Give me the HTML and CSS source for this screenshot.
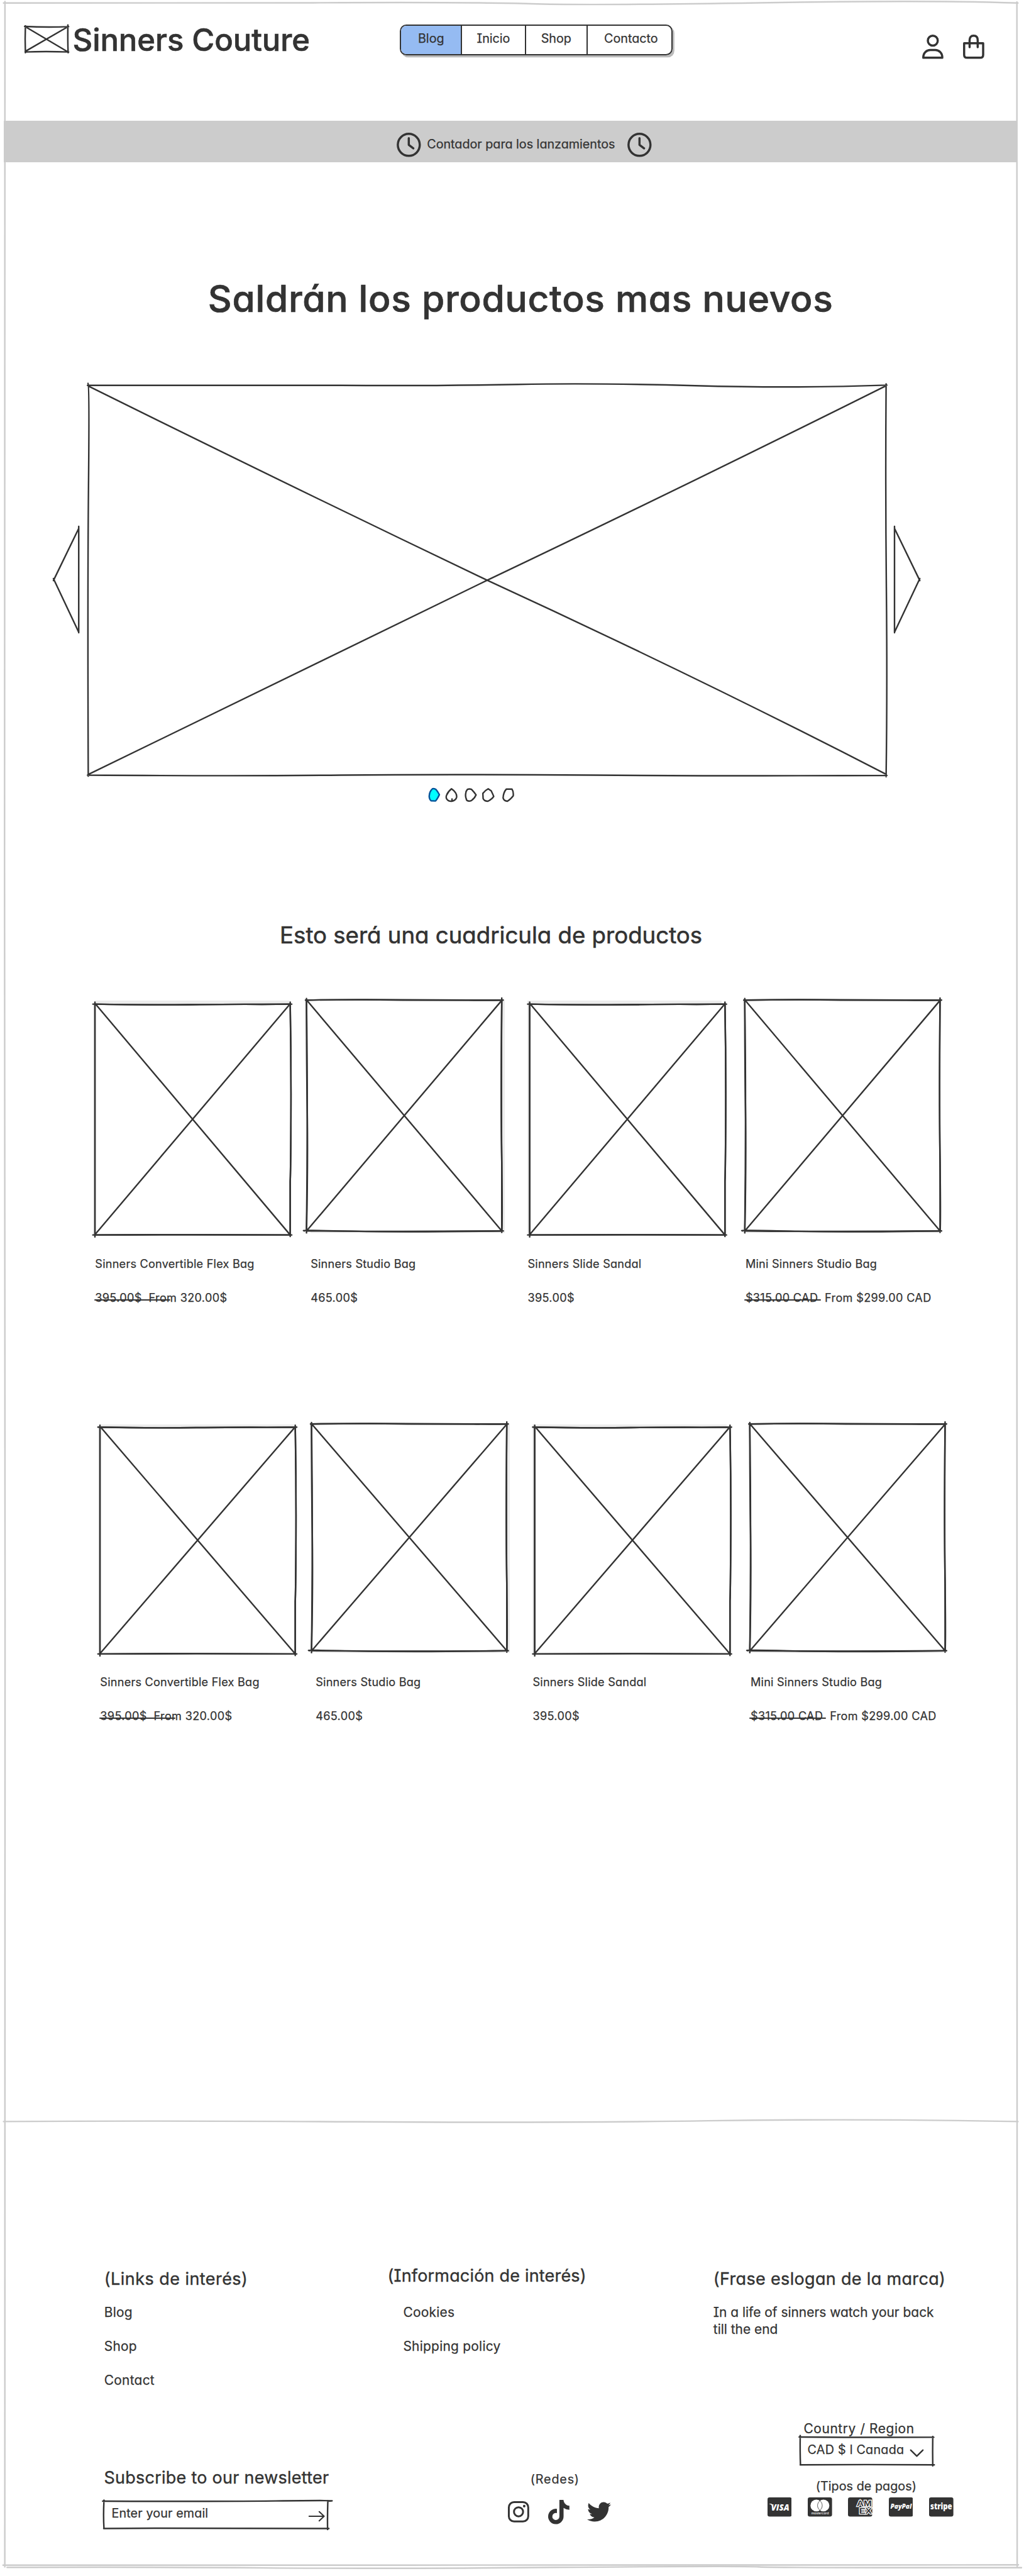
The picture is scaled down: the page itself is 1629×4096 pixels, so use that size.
FILE: index.html
```html
<!DOCTYPE html>
<html lang="es">
<head>
<meta charset="utf-8">
<title>Sinners Couture</title>
<link rel="stylesheet" href="styles.css">
</head>
<body>
<svg class="defs" width="0" height="0" aria-hidden="true">
  <defs>
    <symbol id="sketch-a" viewBox="0 0 386 456" preserveAspectRatio="none" overflow="visible">
      <path d="M0 0Q90 2 190 1T330 .5L386 0Q388 110 387.500 220T386 350L386 456Q190 455 0 456Q1 220 0 0Z" fill="#fff"/>
      <path d="M-4 0Q90 2 190 1T330 .5L389 0M386-4Q388 110 387.500 220T386 350V459M389 456Q190 455 -4 456M0 460Q1 220 0-4M3 2L386 456M383 3L2 453"/>
    </symbol>
    <symbol id="sketch-b" viewBox="0 0 386 456" preserveAspectRatio="none" overflow="visible">
      <path d="M0 0Q100-1.500 190 0L386 0Q384 200 386 320V456Q190 458 0 456Q3 220 0 0Z" fill="#fff"/>
      <path d="M-2 0Q100-1.500 190-.5L320 0Q350 1 389 0M386-4Q384.500 200 386 320T386 459M389 456Q200 459 90 456.500T-4 456M0 460Q3 320 1.500 220T0-3M2 2L386 456M384 3L2 454"/>
    </symbol>
  </defs>
</svg>
<div class="page">
  <svg class="frame" viewBox="0 0 2024 5090" preserveAspectRatio="none" aria-hidden="true">
    <path d="M7 6Q300 7 620 5.500T1050 7.500T1500 5.500T2012 6"/>
    <path d="M9.800 3Q11 900 9 1700T10 3200T9.500 5072"/>
    <path d="M2010 4Q2011 1500 2010 2500T2010.500 5071"/>
    <path d="M7 4192Q300 4190 700 4192.500T1400 4190.500T2012 4192"/>
    <path d="M6 5068.500Q500 5067 800 5068.500T2013 5068"/>
    <path d="M14 5073Q300 5072 520 5074T1100 5073T1500 5072T2019 5073.500"/>
  </svg>

  <header class="header">
    <div class="brand">
      <svg class="brand-mark" viewBox="0 0 85 51"><path d="M-1 0Q40 2 86 .5M84.500-3Q84 30 85 52M86 50.500Q40 49 0 50.500M.5 52Q-.5 25 .5-1M1 1L84 50M84 1L1 49"/></svg>
      <span class="brand-name">Sinners Couture</span>
    </div>
    <nav class="nav">
      <a class="nav-item nav-active">Blog</a>
      <a class="nav-item">Inicio</a>
      <a class="nav-item">Shop</a>
      <a class="nav-item">Contacto</a>
    </nav>
    <div class="tools">
      <svg class="tool" viewBox="0 0 42 48"><circle cx="21" cy="12" r="9.800"/><path d="M2.200 45.800C2 36 9 30.500 16 30.500H26C33 30.500 40 36 39.800 45.800Z"/></svg>
      <svg class="tool" viewBox="0 0 42 48"><path d="M2.200 17.200H39.800V40Q39.800 45.800 34 45.800H8Q2.200 45.800 2.200 40ZM13 25V11Q13 2.200 21 2.200T29 11V25"/></svg>
    </div>
  </header>

  <div class="banner">
    <svg class="clock" viewBox="0 0 48 48"><circle cx="24" cy="24" r="21.700"/><path d="M24 11V24L33 31"/></svg>
    <span class="banner-text">Contador para los lanzamientos</span>
    <svg class="clock" viewBox="0 0 48 48"><circle cx="24" cy="24" r="21.700"/><path d="M24 11V24L33 31"/></svg>
  </div>

  <main>
    <h1 class="hero-title">Saldrán los productos mas nuevos</h1>
    <section class="carousel">
      <svg class="arrow" viewBox="0 0 50 210"><path d="M50 0V210M50 4L0 107M0 103L50 209"/></svg>
      <svg class="slide" viewBox="0 0 1578 771"><path d="M-1 1Q300 0 500 1T850-1T1200 1.500T1579 .5M1577.500-2Q1576 200 1578 400T1577.500 774M1579 771.500Q1300 773 1000 771T500 771T-1 771M.5 773Q-1 400 1 200T0-3M2 3Q400 200 789 386Q1200 575 1575 768M1575 3Q1200 190 789 386Q400 575 2 769"/></svg>
      <svg class="arrow" viewBox="0 0 50 210"><path d="M0 0V210M0 4L50 107M50 103L0 209"/></svg>
    </section>
    <svg class="dots" viewBox="0 0 190 60">
      <path class="dot-on" d="M15 18.800Q19 18 22 20.500Q25 24 28.500 30.500Q26 37 21 43L12 42.500Q8 39 8.500 33Q9 24 15 18.800Z"/>
      <path d="M52.500 19Q57 22 60 26Q63.500 31 62.500 36Q61 42 53 43.500Q46 44 43 39Q41 35 43 31Q46 24 52.500 19ZM53.500 39V43"/>
      <path d="M84 20Q88 18.500 92 20Q97 25 101 31Q98 38 92 42Q87 44.500 83 42Q79.500 36 80.500 29Q81 23 84 20Z"/>
      <path d="M125 19L131 23Q133.500 28 136 34Q133 39 124.500 43.500Q117 43.500 115 38L114.500 28Q119 22 125 19Z"/>
      <path d="M161 19.500L172 19.500Q175.500 25 174.500 33Q170 39 163 43.500Q156 43 154.500 37Q155 26 161 19.500Z"/>
    </svg>

    <h2 class="grid-title">Esto será una cuadricula de productos</h2>
    <section class="products">
      <article class="product">
        <svg class="photo" viewBox="0 0 384 459"><rect class="backing" width="384" height="459"/><use href="#sketch-a" x="0" y="7" width="386" height="456"/></svg>
        <h3 class="name">Sinners Convertible Flex Bag</h3>
        <p class="price sale">395.00$&nbsp; From 320.00$</p>
      </article>
      <article class="product">
        <svg class="photo" viewBox="0 0 384 459"><rect class="backing" width="384" height="459"/><use href="#sketch-b" x="-8" y="-1" width="386" height="456"/></svg>
        <h3 class="name">Sinners Studio Bag</h3>
        <p class="price">465.00$</p>
      </article>
      <article class="product">
        <svg class="photo" viewBox="0 0 384 459"><rect class="backing" width="384" height="459"/><use href="#sketch-a" x="4.500" y="7" width="386" height="456"/></svg>
        <h3 class="name">Sinners Slide Sandal</h3>
        <p class="price">395.00$</p>
      </article>
      <article class="product">
        <svg class="photo" viewBox="0 0 384 459"><rect class="backing" width="384" height="459"/><use href="#sketch-b" x="-1.500" y="-1" width="386" height="456"/></svg>
        <h3 class="name">Mini Sinners Studio Bag</h3>
        <p class="price sale">$315.00 CAD&nbsp; From $299.00 CAD</p>
      </article>
    </section>
    <section class="products products-second">
      <article class="product">
        <svg class="photo" viewBox="0 0 384 451"><rect class="backing" width="384" height="451"/><use href="#sketch-a" x="0" y="5.300" width="386" height="448"/></svg>
        <h3 class="name">Sinners Convertible Flex Bag</h3>
        <p class="price sale">395.00$&nbsp; From 320.00$</p>
      </article>
      <article class="product">
        <svg class="photo" viewBox="0 0 384 451"><rect class="backing" width="384" height="451"/><use href="#sketch-b" x="-8" y="-1" width="386" height="448"/></svg>
        <h3 class="name">Sinners Studio Bag</h3>
        <p class="price">465.00$</p>
      </article>
      <article class="product">
        <svg class="photo" viewBox="0 0 384 451"><rect class="backing" width="384" height="451"/><use href="#sketch-a" x="4.500" y="5.300" width="386" height="448"/></svg>
        <h3 class="name">Sinners Slide Sandal</h3>
        <p class="price">395.00$</p>
      </article>
      <article class="product">
        <svg class="photo" viewBox="0 0 384 451"><rect class="backing" width="384" height="451"/><use href="#sketch-b" x="-1.500" y="-1" width="386" height="448"/></svg>
        <h3 class="name">Mini Sinners Studio Bag</h3>
        <p class="price sale">$315.00 CAD&nbsp; From $299.00 CAD</p>
      </article>
    </section>
  </main>

  <footer class="footer">
    <div class="footer-top">
      <section class="links links-shop">
        <h4 class="footer-title">(Links de interés)</h4>
        <a>Blog</a>
        <a>Shop</a>
        <a>Contact</a>
      </section>
      <section class="links links-info">
        <h4 class="footer-title">(Información de interés)</h4>
        <a>Cookies</a>
        <a>Shipping policy</a>
      </section>
      <section class="links">
        <h4 class="footer-title">(Frase eslogan de la marca)</h4>
        <p class="slogan">In a life of sinners watch your back<br>till the end</p>
      </section>
    </div>
    <div class="footer-bottom">
      <section class="newsletter">
        <h4 class="footer-title">Subscribe to our newsletter</h4>
        <div class="field email">
          <svg class="outline" viewBox="0 0 443 54" preserveAspectRatio="none"><path d="M-2 0Q200 1 340-.5T444 0M443-1Q442 30 442.500 56M445 54Q200 53 100 53.500T0 54M.5 54Q-1 30 .5-2"/></svg>
          <span>Enter your email</span>
          <svg class="go" viewBox="0 0 32 20"><path d="M1 10H30M21 1L30.500 10L21 19"/></svg>
        </div>
      </section>
      <section class="social">
        <h5 class="label">(Redes)</h5>
        <div class="social-icons">
          <svg class="instagram" viewBox="0 0 42 42"><rect x="1.800" y="1.800" width="38.400" height="38.400" rx="10.500"/><circle cx="21" cy="21" r="9"/><circle class="lens" cx="32.200" cy="9.800" r="2.500"/></svg>
          <svg class="tiktok" viewBox="0 0 448 512"><path d="M448,209.910a210.060,210.060,0,0,1-122.770-39.250V349.380A162.550,162.550,0,1,1,185,188.310V278.200a74.620,74.620,0,1,0,52.230,71.180V0l88,0a121.180,121.180,0,0,0,1.860,22.170h0A122.180,122.180,0,0,0,381,102.390a121.430,121.430,0,0,0,67,20.140Z"/></svg>
          <svg class="twitter" viewBox="0 0 512 512"><path d="M459.370 151.716c.325 4.548.325 9.097.325 13.645 0 138.720-105.583 298.558-298.558 298.558-59.452 0-114.680-17.219-161.137-47.106 8.447.974 16.568 1.299 25.340 1.299 49.055 0 94.213-16.568 130.274-44.832-46.132-.975-84.792-31.188-98.112-72.772 6.498.974 12.995 1.624 19.818 1.624 9.421 0 18.843-1.300 27.614-3.573-48.081-9.747-84.143-51.980-84.143-102.985v-1.299c13.969 7.797 30.214 12.670 47.431 13.319-28.264-18.843-46.781-51.005-46.781-87.391 0-19.492 5.197-37.360 14.294-52.954 51.655 63.675 129.300 105.258 216.365 109.807-1.624-7.797-2.599-15.918-2.599-24.040 0-57.828 46.782-104.934 104.934-104.934 30.213 0 57.502 12.670 76.670 33.137 23.715-4.548 46.456-13.320 66.599-25.340-7.798 24.366-24.366 44.833-46.132 57.827 21.117-2.273 41.584-8.122 60.426-16.243-14.292 20.791-32.161 39.308-52.628 54.253z"/></svg>
        </div>
      </section>
      <section class="payments">
        <h5 class="label region-label">Country / Region</h5>
        <div class="field region">
          <svg class="outline" viewBox="0 0 262 55" preserveAspectRatio="none"><path d="M-2 0Q130 1 264 .5M262-1Q261.500 30 262 57M265 55Q130 54 0 55M.5 55Q-.5 30 0-3"/></svg>
          <span>CAD $ l Canada</span>
          <svg class="chevron" viewBox="0 0 26 14"><path d="M1 1L13 13L25 1"/></svg>
        </div>
        <h5 class="label pay-label">(Tipos de pagos)</h5>
        <div class="cards">
          <svg class="card" viewBox="0 0 48 38"><rect width="48" height="38" rx="4"/><text class="visa" x="7" y="25.500" textLength="36" lengthAdjust="spacingAndGlyphs">VISA</text><path class="white" d="M2.500 12.500H8L10 18Q7 13.500 2.500 12.500Z"/></svg>
          <svg class="card" viewBox="0 0 48 38"><rect width="48" height="38" rx="4"/><circle class="white" cx="17" cy="16" r="11.700"/><circle class="white" cx="31" cy="16" r="11.700"/><path class="lens-line" d="M24 6.600A11.700 11.700 0 0 1 24 25.400A11.700 11.700 0 0 1 24 6.600Z"/><text class="mastercard" x="7" y="33.500" textLength="34.500">mastercard</text></svg>
          <svg class="card" viewBox="0 0 48 38"><rect width="48" height="38" rx="4"/><text class="amex" x="17.500" y="17.500" textLength="29.500" lengthAdjust="spacingAndGlyphs">AM</text><text class="amex" x="22" y="32" textLength="25" lengthAdjust="spacingAndGlyphs">EX</text></svg>
          <svg class="card" viewBox="0 0 48 38"><rect width="48" height="38" rx="4"/><text class="paypal" x="3" y="22.500" textLength="42" lengthAdjust="spacingAndGlyphs">PayPal</text></svg>
          <svg class="card" viewBox="0 0 48 38"><rect width="48" height="38" rx="4"/><text class="stripe" x="2.500" y="24" textLength="43" lengthAdjust="spacingAndGlyphs">stripe</text></svg>
        </div>
      </section>
    </div>
  </footer>
</div>
</body>
</html>
```
FILE: styles.css
```css
/* 1rem = ten design units; the design is 2024 x 5090 units */
html { font-size: 8.0484px; }
* { box-sizing: border-box; }
body {
  margin: 0;
  background: #fff;
  color: #333;
  font-family: Inter, "Liberation Sans", sans-serif;
  font-weight: 400;
  font-feature-settings: "cv11", "cv08";
  -webkit-text-stroke: 0.25px #333;
}
h1, h2, h3, h4, h5, p { margin: 0; font-weight: 400; }
svg { display: block; overflow: visible; fill: none; stroke: #333; stroke-width: 3; stroke-linecap: round; stroke-linejoin: round; }
.defs { position: absolute; }
.page { position: relative; width: 100%; height: 4096px; overflow: hidden; }
.frame { position: absolute; inset: 0; width: 100%; height: 100%; stroke: #ccc; pointer-events: none; }

.header { display: flex; align-items: flex-start; height: 23.9rem; padding: 0 7.9rem 0 4.96rem; }
.brand { display: flex; width: 56.1rem; margin-top: 5.17rem; }
.brand-mark { width: 8.5rem; height: 5.1rem; }
.brand-name { margin: -1.4rem 0 0 0.9rem; font-size: 6.1rem; font-weight: 500; line-height: 8.4rem; letter-spacing: -0.0017em; white-space: nowrap; -webkit-text-stroke-width: 0.6px; }
.nav { display: flex; width: 53.9rem; height: 6.1rem; margin: 4.85rem 0 0 18rem; border: 0.27rem solid #333; border-radius: 1.3rem; box-shadow: 0.35rem 0.4rem 0 #bbb; overflow: hidden; }
.nav-item { width: 12.6rem; padding-top: 1rem; text-align: center; font-size: 2.45rem; line-height: 3.2rem; }
.nav-item + .nav-item { border-left: 0.25rem solid #333; }
.nav-active { width: 11.8rem; background: #95bbf2; }
.nav-item:nth-child(3) { width: 12.2rem; }
.nav-item:last-child { flex: 1; padding-left: 0.6rem; }
.tools { display: flex; gap: 3.8rem; margin: 6.8rem 0 0 auto; }
.tool { width: 4.2rem; height: 4.8rem; stroke-width: 4.3; }

.banner { display: flex; align-items: center; height: 8.2rem; margin: 0 1.45rem 0 0.7rem; padding: 1.2rem 0 0 77.7rem; background: #ccc; }
.clock { width: 4.8rem; height: 4.8rem; stroke-width: 4.3; }
.banner-text { width: 38.5rem; margin: 0 1.05rem 0 1.2rem; font-size: 2.45rem; line-height: 3.2rem; white-space: nowrap; }

.hero-title { padding: 22.4rem 0 0 41.1rem; font-size: 7.3rem; font-weight: 500; line-height: 9rem; letter-spacing: 0.0117em; -webkit-text-stroke-width: 0.7px; }
.carousel { display: flex; align-items: center; margin-top: 12.5rem; padding-left: 10.6rem; }
.arrow { width: 5rem; height: 21rem; }
.slide { width: 157.8rem; height: 77.1rem; margin: 0 1.6rem 0 1.8rem; }
.dots { width: 19rem; height: 6rem; margin: 0.9rem 0 0 84rem; }
.dot-on { fill: #0ff; stroke: #00529a; }

.grid-title { padding: 21.8rem 0 0 55.3rem; font-size: 4.55rem; line-height: 6rem; -webkit-text-stroke-width: 0.6px; }
.products { display: grid; grid-template-columns: 42.6rem 42.9rem 43.05rem 40rem; margin: 9.85rem 0 0 18.8rem; }
.photo { width: 38.4rem; height: 45.9rem; }
.backing { fill: #ececec; stroke: none; }
.name { margin-top: 4.55rem; font-size: 2.25rem; line-height: 3rem; letter-spacing: 0.0128em; white-space: nowrap; }
.price { margin-top: 3.8rem; font-size: 2.25rem; line-height: 3rem; letter-spacing: 0.0183em; white-space: nowrap; }
.sale { position: relative; }
.sale::after { content: ""; position: absolute; left: -0.2rem; top: 1.8rem; width: 15.1rem; height: 0.3rem; border-radius: 0.15rem; background: #333; }
.products-second { margin: 23.55rem 0 0 19.8rem; }
.products-second .photo { height: 45.1rem; }
.products-second .name { margin-top: 4.18rem; }

.footer { margin-top: 78.5rem; padding-top: 29.05rem; }
.footer-top { display: grid; grid-template-columns: 56rem 64.4rem auto; padding-left: 20.6rem; }
.links { display: flex; flex-direction: column; gap: 3.33rem; font-size: 2.6rem; line-height: 3.35rem; letter-spacing: 0.012em; }
.footer-title { margin-bottom: -0.5rem; font-size: 3.35rem; line-height: 4.4rem; letter-spacing: 0.0132em; white-space: nowrap; -webkit-text-stroke-width: 0.4px; }
.links-shop .footer-title { letter-spacing: 0.0174em; }
.links-info { margin-top: -0.6rem; }
.links-info .footer-title { margin-bottom: 0.1rem; letter-spacing: 0.0078em; }
.links-info a { padding-left: 3.1rem; }
.slogan { letter-spacing: 0; }
.footer-bottom { display: flex; align-items: flex-start; padding: 6.27rem 0 0 20.55rem; }
.newsletter { width: 44.3rem; margin-top: 9rem; }
.newsletter .footer-title { margin: 0; letter-spacing: 0.0103em; }
.field { position: relative; display: flex; font-size: 2.45rem; line-height: 3.2rem; white-space: nowrap; }
.outline { position: absolute; inset: 0; width: 100%; height: 100%; }
.email { height: 5.4rem; margin-top: 2.45rem; padding: 0.95rem 0.7rem 0 1.5rem; letter-spacing: 0.0066em; }
.go { width: 3.2rem; height: 2rem; margin: 1.1rem 0 0 auto; stroke-width: 2.6; }
.label { font-size: 2.45rem; line-height: 3.2rem; }
.social { width: 20.5rem; margin: 10rem 0 0 35.5rem; }
.social .label { padding-left: 4.5rem; letter-spacing: 0.0425em; }
.social-icons { display: flex; align-items: flex-start; margin-top: 2.4rem; }
.instagram { width: 4.2rem; height: 4.2rem; margin-top: 0.3rem; stroke-width: 3.7; }
.lens { fill: #333; stroke: none; }
.tiktok { width: 4.2rem; height: 4.8rem; margin-left: 3.8rem; fill: #333; stroke: none; }
.twitter { width: 4.73rem; height: 4.73rem; margin-left: 3.55rem; fill: #333; stroke: none; }
.payments { margin-left: 30.8rem; }
.region-label { padding-left: 7.2rem; font-size: 2.6rem; line-height: 3.35rem; letter-spacing: 0.0285em; }
.region { width: 26.2rem; height: 5.5rem; margin: -0.15rem 0 0 6.56rem; padding: 1rem 1.9rem 0 1.4rem; letter-spacing: 0.0129em; }
.chevron { width: 2.6rem; height: 1.4rem; margin: 1.5rem 0 0 auto; }
.pay-label { margin-top: 2.63rem; padding-left: 9.6rem; letter-spacing: 0.003em; }
.cards { display: flex; gap: 3.2rem; margin-top: 0.6rem; }
.card { width: 4.8rem; height: 3.8rem; overflow: hidden; fill: #333; stroke: none; }
.card text, .white { fill: #fff; }
.card text { font-family: "Open Sans", sans-serif; font-weight: 800; letter-spacing: 0; -webkit-text-stroke-width: 0; }
.lens-line { fill: none; stroke: #333; stroke-width: 1; }
.visa { font-size: 17.5px; font-style: italic; }
.card .mastercard { font-family: Inter, sans-serif; font-size: 6px; font-weight: 500; }
.card .amex { font-family: "Liberation Sans", sans-serif; font-weight: 700; fill: #333; stroke: #fff; stroke-width: 2.8; stroke-linejoin: miter; paint-order: stroke; font-size: 16.5px; }
.paypal { font-size: 12.5px; font-style: italic; }
.stripe { font-size: 16.5px; }
```
